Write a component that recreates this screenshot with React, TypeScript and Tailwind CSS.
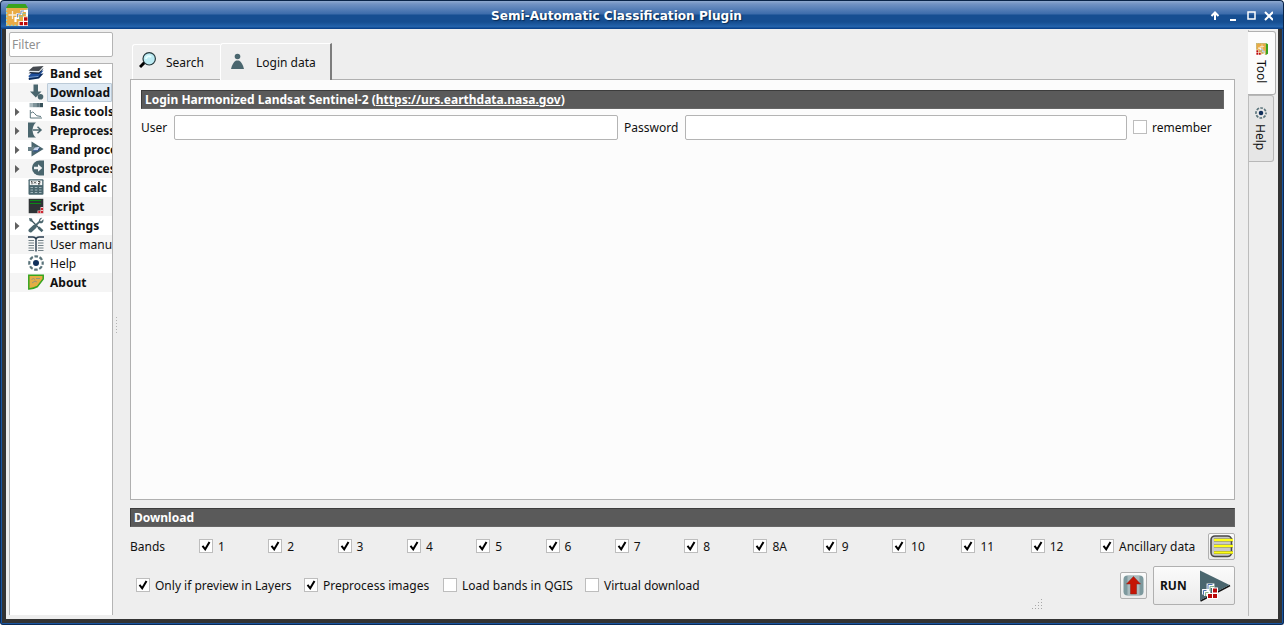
import React from "react";

type Kids = { children?: React.ReactNode };
const G = "#4a666e";

function Svg({ children, size = 16, className = "" }: Kids & { size?: number; className?: string }) {
  return (
    <svg width={size} height={size} viewBox="0 0 16 16" className={`shrink-0 ${className}`}>
      {children}
    </svg>
  );
}

function AppLogo({ size = 22 }: { size?: number }) {
  return (
    <svg width={size} height={size} viewBox="0 0 22 22" className="shrink-0">
      <rect x="0" y="4" width="22" height="18" fill="#e9ab45" />
      <path d="M.600 4.500V21.400H21.400V4.500" fill="none" stroke="#8ed3d1" strokeWidth="1.200" strokeDasharray="2 1.500" />
      <path d="M0 4L2.500 0H19.500L22 4z" fill="#3aa31c" />
      <path d="M6.500 7v8M2.500 11h8" stroke="#f9efdb" strokeWidth="1.300" />
      <path d="M11.500 14V10H15.500V7H21V12M9.500 18v-4h4" fill="none" stroke="#fff" strokeWidth="2.200" />
      <path d="M11.500 13.500V10H15V7H18" fill="none" stroke="#6684b8" strokeWidth=".900" />
      <path d="M13.500 16v-3.500h3V9.500h3.500" fill="none" stroke="#8fc09a" strokeWidth=".900" />
      <path d="M17 12.500h5V22h-9.500v-4.800H17z" fill="#fff" />
      <path d="M18 13.300h3.500v3.500H18zM13.500 17.900H17v3.400h-3.500zM18 17.900h3.500v3.400H18z" fill="#bd0b0b" />
    </svg>
  );
}

const BandSetIcon = () => (
  <Svg>
    <path d="M.500 13.500L5 9.500 15.500 8.500 11 13.500 1 15z" fill="#0a2a5c" />
    <path d="M.500 11L5 6.500 15.500 5.500 11 11 1 12.500z" fill="#1f4f9c" />
    <path d="M.500 8.200L5 5l10.500-1.500L11 8.800z" fill="#101c30" />
    <path d="M.500 7L5 4l10.500-1L11 7.500z" fill="#dfe7ee" />
    <path d="M.500 5.800L5 1.800 15.600 1 11 6z" fill="#454a50" />
    <path d="M1.500 12.400l9-1" stroke="#8eb5e6" strokeWidth=".800" />
  </Svg>
);
const DownloadIcon = () => (
  <Svg>
    <path d="M5.500 .500h4.500v7H13.500l-5.700 6-5.800-6h3.500z" fill={G} />
    <circle cx="12.500" cy="12.800" r="2.800" fill={G} />
  </Svg>
);
const BasicIcon = () => (
  <Svg>
    <path d="M1.500 0h3.500v4.200H1.500z" fill="#aab9bd" />
    <path d="M5 0h3.200v4.200H5z" fill="#7f949a" />
    <path d="M8.200 0h3.400v4.200H8.200z" fill="#60777e" />
    <path d="M11.600 0H15v4.200h-3.400z" fill="#38525a" />
    <path d="M2.300 7v8H14M3 10Q5 7.500 6.500 10.500T13 13.500" fill="none" stroke={G} strokeWidth=".900" />
  </Svg>
);
const PreIcon = () => (
  <Svg>
    <path d="M0 0.500h8C3.500 4 3.500 12.500 8 15.500H0z" fill={G} />
    <path d="M5 8h8M9.500 4.800L13 8 9.500 11.200" fill="none" stroke={G} strokeWidth="1.500" />
  </Svg>
);
const BandProcIcon = () => (
  <Svg>
    <path d="M3.500 .500L15.600 8 3.500 15.500z" fill={G} />
    <path d="M0 6h5V4.500L8 8l-3 4v-2H0z" fill="#698087" />
    <path d="M5 9.200L7 6.400l4.500-.700-1.700 4z" fill="#c7d5ec" />
    <path d="M5 10l4.800-.200 1.700-2.600" fill="none" stroke="#25488b" />
  </Svg>
);
const PostIcon = () => (
  <Svg>
    <path d="M16 .500H11.500a7.500 7.500 0 0 0 0 15H16z" fill={G} />
    <path d="M6 6.700h4V4.200L14.300 8 10 11.800V9.300H6z" fill="#f1f4f5" />
  </Svg>
);
const CalcIcon = () => (
  <Svg>
    <rect x=".500" y=".300" width="15" height="15.400" rx="1" fill={G} />
    <rect x="1.800" y="1.500" width="12.400" height="4.600" fill="#f5f7f7" />
    <path d="M3 3l1-.700v3M6 2.500l2 2m0-2l-2 2M10 2.500h2v1.200l-2 1.300h2.200" fill="none" stroke="#222" strokeWidth=".800" />
    <path d="M2.500 8.500h2.500M6.800 8.500h2.500M11 8.500h2.500M2.500 11h2.500M6.800 11h2.500M11 11h2.500M2.500 13.500h2.500M6.800 13.500h2.500M11 13.500h2.500" stroke="#a0b3b9" strokeWidth="1.200" />
  </Svg>
);
const ScriptIcon = () => (
  <Svg>
    <rect x=".700" y=".800" width="14.600" height="14.400" fill="#2e3335" />
    <path d="M2 2.500h11M2 5.500h11" stroke="#0b8a16" strokeWidth="1" />
    <path d="M9.500 15.500v-3h3V9h3v6.500z" fill="#f3c5c5" />
    <path d="M13 10h2v2h-2zM10.300 13h2v2h-2zM13 13h2v2h-2z" fill="#cf2631" />
  </Svg>
);
const SettingsIcon = () => (
  <Svg>
    <path d="M2.500 2.500L14 14" stroke="#3b545c" strokeWidth="1.300" />
    <path d="M1 1l3 .600.600 2L3.500 4.700 1.700 4z" fill={G} />
    <path d="M10.500 10.500l4 3.700" stroke={G} strokeWidth="2.600" />
    <path d="M6.800 9.500L2.500 13.500" stroke={G} strokeWidth="4" strokeLinecap="round" />
    <path d="M7 9l4.600-4.300" stroke={G} strokeWidth="1.800" />
    <path d="M14.300.800L12 3.200l1 1.200 2.300-2.200c.800 2.500-1 4.500-3.500 4.100C9.600 4.500 11.300.500 14.300.800z" fill={G} />
  </Svg>
);
const ManualIcon = () => (
  <Svg>
    <path d="M0 1h5Q7.300 1 8 3 8.700 1 11 1h5M8 3v12.500" fill="none" stroke="#273b4d" strokeWidth="1.400" />
    <path d="M.500 4.500H6M.500 7H6M.500 9.500H6M.500 12H6M.500 14.500H6M10 4.500h5.500M10 7h5.500M10 9.500h5.500M10 12h5.500M10 14.500h5.500" stroke="#728188" strokeWidth="1.100" />
  </Svg>
);
const HelpIcon = ({ size = 16, className = "" }: { size?: number; className?: string }) => (
  <Svg size={size} className={className}>
    <circle cx="8" cy="8" r="6.700" fill="none" stroke="#5b747b" strokeWidth="2.200" strokeDasharray="3.600 1.662" strokeDashoffset="1.800" />
    <circle cx="8" cy="8" r="3" fill="#12305b" />
  </Svg>
);
const AboutIcon = () => (
  <Svg>
    <path d="M.800 1.300h14.400v3.700L9.500 12.500Q6 14.500.800 15z" fill="#e4ad43" stroke="#36a51e" strokeWidth="1.500" />
    <path d="M3.500 5.500l2-1 1.500 1M8 4.500h4M4 9l3-2 2 1" fill="none" stroke="#8b9280" strokeWidth=".900" />
  </Svg>
);

const tree = [
  { label: "Band set", icon: <BandSetIcon />, bold: true },
  { label: "Download", icon: <DownloadIcon />, bold: true, selected: true },
  { label: "Basic tools", icon: <BasicIcon />, bold: true, expands: true },
  { label: "Preprocessing", icon: <PreIcon />, bold: true, expands: true },
  { label: "Band processing", icon: <BandProcIcon />, bold: true, expands: true },
  { label: "Postprocessing", icon: <PostIcon />, bold: true, expands: true },
  { label: "Band calc", icon: <CalcIcon />, bold: true },
  { label: "Script", icon: <ScriptIcon />, bold: true },
  { label: "Settings", icon: <SettingsIcon />, bold: true, expands: true },
  { label: "User manual", icon: <ManualIcon /> },
  { label: "Help", icon: <HelpIcon /> },
  { label: "About", icon: <AboutIcon />, bold: true },
];

function Sidebar() {
  return (
    <div className="ml-[3px] mt-[3px] flex w-[104px] shrink-0 flex-col">
      <input placeholder="Filter" className="h-[25px] w-full rounded-[2px] border border-[#b4b4b4] bg-white px-[2px] text-[12px] placeholder:text-[#909090]" />
      <div className="mt-[6px] h-[552px] overflow-hidden border border-b-0 border-[#b4b4b4] bg-white">
        {tree.map((t, i) => (
          <div key={t.label} className={`flex h-[19px] items-center pl-[5px] ${i % 2 ? "bg-[#f5f5f5]" : "bg-white"}`}>
            <span className="flex w-[13px] shrink-0">
              {t.expands && (
                <svg width="5" height="8" viewBox="0 0 5 8">
                  <path d="M0 0L4.500 4 0 8z" fill="#606060" />
                </svg>
              )}
            </span>
            <span className="-mt-px flex shrink-0">{t.icon}</span>
            <span
              className={`ml-[3px] h-[19px] shrink-0 whitespace-nowrap border pl-[2px] leading-[17px] ${t.bold ? "font-bold" : ""} ${
                t.selected ? "w-[65px] rounded-[1px] border-[#bccbd8] bg-[#dfeaf4]" : "border-transparent"
              }`}
            >
              {t.label}
            </span>
          </div>
        ))}
      </div>
    </div>
  );
}

function Check({ label, on = true, className = "" }: { label: string; on?: boolean; className?: string }) {
  return (
    <label className={`flex shrink-0 items-center gap-[5px] whitespace-nowrap ${className}`}>
      <span className="mb-[2px] flex size-[14px] items-center justify-center border border-[#bdbdbd] bg-white">
        {on && (
          <svg width="10" height="10" viewBox="0 0 10 10">
            <path d="M1.500 4.800L4.200 8.300 8.500 1" fill="none" stroke="#000" strokeWidth="2" />
          </svg>
        )}
      </span>
      {label}
    </label>
  );
}

function SectionHeader({ children }: Kids) {
  return (
    <div className="h-[19px] shrink-0 border border-b-[#666] border-l-[#3c3c3c] border-r-[#666] border-t-[#3c3c3c] bg-[#5a5a5a] pl-[3px] font-bold leading-[17px] text-white">
      {children}
    </div>
  );
}

const bands = ["1", "2", "3", "4", "5", "6", "7", "8", "8A", "9", "10", "11", "12"];
const buttonFace = "flex shrink-0 items-center rounded-[2px] border border-[#b0b0b0] bg-linear-to-b from-[#fbfbfb] to-[#ebebeb]";

function Main() {
  return (
    <div className="ml-[17px] mt-[14px] flex w-[1105px] shrink-0 flex-col">
      <div className="relative z-10 flex h-[37px] items-end pl-[2px]">
        <div className="mb-px flex h-[35px] w-[88px] items-center rounded-tl-[3px] border-l border-t border-white pl-[6px]">
          <svg width="18" height="18" viewBox="0 0 18 18" className="-mt-[4px]">
            <path d="M5.500 11.500L1 16" stroke="#000" strokeWidth="3" />
            <circle cx="10.200" cy="7.800" r="6.200" fill="#bcebf3" stroke="#26383c" strokeWidth="1.200" />
            <path d="M7 8a3 3 0 0 1 5-2" fill="none" stroke="#e6ffff" strokeWidth="2" />
          </svg>
          <span className="ml-[9px] pt-[2px]">Search</span>
        </div>
        <div className="flex h-[37px] w-[112px] items-center rounded-tl-[3px] border-l border-r-2 border-t border-l-white border-r-[#7d7d7d] border-t-white bg-[#eee] pl-[9px]">
          <svg width="16" height="17" viewBox="0 0 16 17" className="-mt-[2px]">
            <circle cx="7.500" cy="3.500" r="2.800" fill={G} />
            <path d="M1 16Q2.500 9.500 6 7.500h3Q12.500 9.500 14 16z" fill={G} />
          </svg>
          <span className="ml-[10px] pt-[2px]">Login data</span>
        </div>
      </div>
      <div className="-mt-px flex h-[421px] flex-col border border-[#b0b0b0] bg-[#fcfcfc] px-[10px] pt-[10px]">
        <SectionHeader>
          <span className="tracking-[0.02px]">
            Login Harmonized Landsat Sentinel-2 (<u>https://urs.earthdata.nasa.gov</u>)
          </span>
        </SectionHeader>
        <div className="mt-[6px] flex h-[25px] items-center">
          <span className="w-[33px] shrink-0">User</span>
          <input className="h-[25px] w-[444px] rounded-[2px] border border-[#b4b4b4] bg-white" />
          <span className="w-[67px] shrink-0 pl-[6px]">Password</span>
          <input className="h-[25px] w-[442px] rounded-[2px] border border-[#b4b4b4] bg-white" />
          <Check label="remember" on={false} className="ml-[6px]" />
        </div>
      </div>
      <div className="mt-[8px]">
        <SectionHeader>Download</SectionHeader>
      </div>
      <div className="mt-[6px] flex h-[27px] items-center">
        <span className="w-[69px] shrink-0">Bands</span>
        <div className="grid w-[901px] shrink-0 grid-cols-13">
          {bands.map((b) => (
            <Check key={b} label={b} />
          ))}
        </div>
        <Check label="Ancillary data" />
        <button className={`${buttonFace} ml-auto size-[27px] justify-center`}>
          <svg width="23" height="23" viewBox="0 0 23 23">
            <rect x="1" y="1" width="20.500" height="20.500" rx="4" fill="#c9c9c9" stroke="#484848" strokeWidth="1.600" />
            <path d="M4 5h19M4 11h19M4 17.500h19" stroke="#8f8e2b" strokeWidth="2.800" />
            <path d="M4 5h19M4 11h19M4 17.500h19" stroke="#ffff16" strokeWidth="1.800" />
          </svg>
        </button>
      </div>
      <div className="mt-[6px] flex h-[39px] items-center pl-[6px]">
        <Check label="Only if preview in Layers" className="w-[168px]" />
        <Check label="Preprocess images" className="w-[139px]" />
        <Check label="Load bands in QGIS" on={false} className="w-[142px]" />
        <Check label="Virtual download" on={false} />
        <button className={`${buttonFace} ml-auto size-[27px] justify-center`}>
          <svg width="21" height="21" viewBox="0 0 21 21">
            <rect x=".500" y=".500" width="20" height="20" rx="4" fill="#7d999e" />
            <rect x="4.500" y="1" width="12" height="19" fill="#a9babd" />
            <path d="M10.500 1.500l7 7.500h-4v10h-6V9h-4z" fill="#c51505" stroke="#8d2017" strokeWidth=".500" />
          </svg>
        </button>
        <button className={`${buttonFace} ml-[6px] h-[39px] w-[82px] pl-[6px] font-bold`}>
          <span className="w-[39px] text-left">RUN</span>
          <svg width="32" height="32" viewBox="0 0 32 32">
            <path d="M1.500 31L31 15.500" stroke="#111" strokeWidth="1.500" />
            <path d="M1 .500L30.500 15 1 30.500z" fill={G} />
            <path d="M4.500 24.500v-4h4.500v-5.500h5v3M6.500 26v-4h3.500v-5.500h5" fill="none" stroke="#fff" strokeWidth="2.800" />
            <path d="M4.500 24.500v-4h3M9 19v-4.500h4.500" fill="none" stroke="#4a72b0" />
            <path d="M6.500 26v-3.500h3M11 21v-4.500h4" fill="none" stroke="#86b68c" />
            <path d="M13 17.500h6v11.500H8v-6h5z" fill="#fff" />
            <path d="M14 18.500h4v4h-4zM9 24h4v4H9zM14 24h4v4h-4z" fill="#b90909" />
          </svg>
        </button>
      </div>
    </div>
  );
}

function Grip() {
  return (
    <svg width="11" height="11" viewBox="0 0 11 11">
      {[[9, 0], [6, 3], [9, 3], [3, 6], [6, 6], [9, 6], [0, 9], [3, 9], [6, 9], [9, 9]].map(([x, y]) => (
        <rect key={`${x}-${y}`} x={x} y={y} width="1" height="1" fill="#a8a8a8" />
      ))}
    </svg>
  );
}

function SideTabs() {
  return (
    <div className="ml-[13px] mt-[1px] flex h-[586px] w-[29px] flex-col items-start border-l border-[#bcbcbc]">
      <div className="-ml-px mt-px flex h-[64px] w-[28px] flex-col items-center rounded-r-[3px] border border-l-0 border-[#b0b0b0] bg-[#fcfcfc] pt-[11px]">
        <div className="rotate-90"><AppLogo size={12} /></div>
        <span className="mr-[2px] mt-[5px] leading-[16px] [writing-mode:vertical-rl]">Tool</span>
      </div>
      <div className="flex h-[67px] w-[25px] flex-col items-center rounded-r-[3px] border border-l-0 border-[#b8b8b8] bg-[#e6e6e6] pt-[11px]">
        <HelpIcon size={12} />
        <span className="mr-[3px] mt-[5px] leading-[16px] [writing-mode:vertical-rl]">Help</span>
      </div>
    </div>
  );
}

function TitleBar() {
  return (
    <div className="flex h-[29px] shrink-0 items-center rounded-t-[4px] border-x border-t border-[#092448] bg-[linear-gradient(to_bottom,#8faad0_0px,#7192c3_3px,#3c6cab_13px,#164e91_14px,#164e91_21px,#2565ad_26px,#0b438b_27px,#0b438b_28px)] pl-[5px]">
      <AppLogo />
      <div className="w-[1177px] pt-[2px] text-center font-['DejaVu_Sans'] text-[12.1px] font-bold text-white [text-shadow:1px_1px_1px_#0a2c55]">
        Semi-Automatic Classification Plugin
      </div>
      <svg width="68" height="14" viewBox="0 0 68 14" fill="none" stroke="#fff" strokeWidth="2">
        <path d="M10 12V5M6.500 8l3.500-3.500L13.500 8" />
        <path d="M25 12h6" />
        <rect x="43" y="4" width="7" height="7" strokeWidth="1.500" />
        <path d="M60 4l8 8M68 4l-8 8" />
      </svg>
    </div>
  );
}

export default function App() {
  return (
    <div className="flex h-[625px] w-[1284px] flex-col overflow-hidden bg-white font-['Noto_Sans','Open_Sans',sans-serif] text-[12px] text-[#111]">
      <TitleBar />
      <div className="flex h-[596px] rounded-b-[3px] border border-t-0 border-[#0b2a55] bg-[#1955a0] px-px pb-px">
        <div className="flex w-full bg-[#333] px-[4px] pb-[4px]">
          <div className="flex w-full overflow-hidden bg-[#eee]">
            <Sidebar />
            <div className="-mr-[5px] ml-[2px] mt-[288px] shrink-0">
              <svg width="3" height="17" viewBox="0 0 3 17" fill="#b4b4b4">
                <path d="M1 0h1v1H1zM1 3h1v1H1zM1 6h1v1H1zM1 9h1v1H1zM1 12h1v1H1zM1 15h1v1H1z" />
              </svg>
            </div>
            <div className="relative">
              <Main />
              <div className="absolute left-[919px] top-[570px]"><Grip /></div>
            </div>
            <SideTabs />
          </div>
        </div>
      </div>
    </div>
  );
}
